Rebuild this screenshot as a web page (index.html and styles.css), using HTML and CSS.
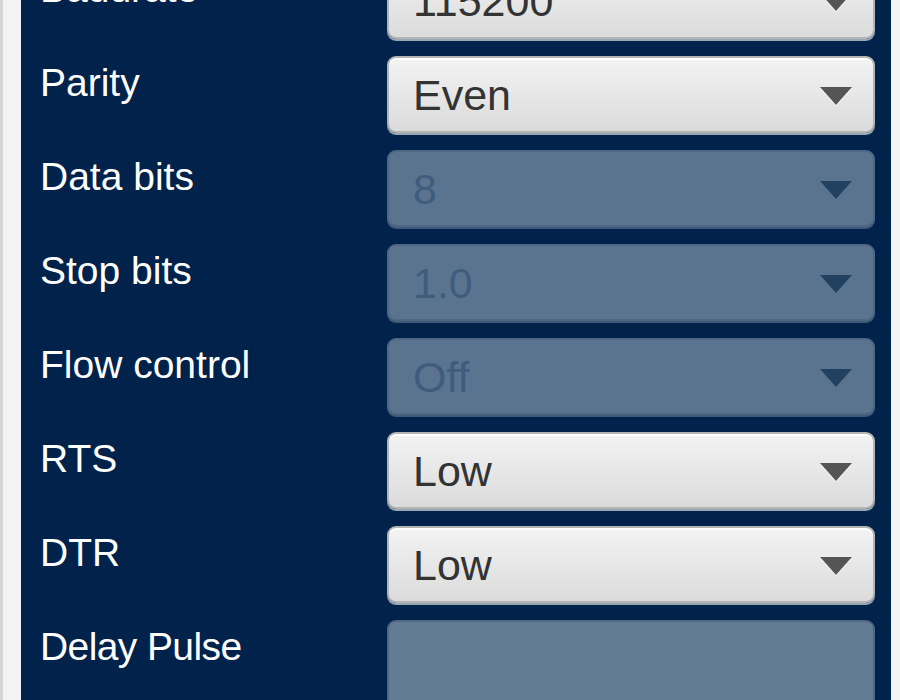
FILE: index.html
```html
<!DOCTYPE html>
<html lang="en">

<head>
    <meta charset="UTF-8">
    <title>Serial settings</title>
    <link rel="stylesheet" href="styles.css">
</head>

<body>

    <div class="side venstre"></div>

    <main class="panel">
        <section class="indstillinger">
            <div class="raekke">
                <label>Baudrate</label>
                <div class="dropdown">115200</div>
            </div>
            <div class="raekke">
                <label>Parity</label>
                <div class="dropdown">Even</div>
            </div>
            <div class="raekke">
                <label>Data bits</label>
                <div class="dropdown disabled">8</div>
            </div>
            <div class="raekke">
                <label>Stop bits</label>
                <div class="dropdown disabled">1.0</div>
            </div>
            <div class="raekke">
                <label>Flow control</label>
                <div class="dropdown disabled">Off</div>
            </div>
            <div class="raekke">
                <label>RTS</label>
                <div class="dropdown">Low</div>
            </div>
            <div class="raekke">
                <label>DTR</label>
                <div class="dropdown">Low</div>
            </div>
            <div class="raekke">
                <label class="lang">Delay Pulse</label>
                <div class="felt"></div>
            </div>
        </section>
    </main>

    <div class="side hoejre"></div>

</body>

</html>
```

FILE: styles.css
```css
html,
body {
    margin: 0;
    height: 100%;
    overflow: hidden;
}

body {
    display: flex;
    font-family: "Liberation Sans", Arial, sans-serif;
    background: #f3f3f3;
}

.side {
    background: #f3f3f3;
}

.venstre {
    width: 18px;
    border-left: 3px solid #d6d6d6;
}

.hoejre {
    width: 9px;
}

.panel {
    flex: 1;
    background: #00224b;
    overflow: hidden;
    padding: 0 16px 0 19px;
}

.indstillinger {
    margin-top: -38px;
    display: grid;
    grid-template-columns: 347px 1fr;
    row-gap: 15px;
}

.raekke {
    display: contents;
}

label {
    color: #ffffff;
    font-size: 39px;
    line-height: 46px;
    padding-top: 4px;
}

.lang {
    letter-spacing: -0.6px;
}

.dropdown {
    position: relative;
    box-sizing: border-box;
    height: 77px;
    margin-bottom: 2px;
    display: flex;
    align-items: center;
    padding: 2px 0 0 24px;
    border: 2px solid #b4b4b4;
    border-radius: 9px;
    background: linear-gradient(#f3f3f3, #dbdbdb);
    box-shadow: inset 0 2px 0 #ffffff, 0 2px 0 #9ba6b5;
    color: #333333;
    font-size: 43px;
    line-height: 1;
}

.dropdown::after {
    content: "";
    position: absolute;
    right: 21px;
    top: 29px;
    border-top: 18px solid #555555;
    border-left: 16px solid transparent;
    border-right: 16px solid transparent;
    filter: drop-shadow(0 1px 0 #ffffff);
}

.disabled {
    border-color: #4d6784;
    background: #5a7490;
    box-shadow: 0 2px 0 #3f5878;
    color: #3f5c7c;
}

.disabled::after {
    border-top-color: #22405f;
    filter: none;
}

.felt {
    box-sizing: border-box;
    height: 100px;
    border: 2px solid #4d6784;
    border-radius: 9px;
    background: #627c96;
}
```
